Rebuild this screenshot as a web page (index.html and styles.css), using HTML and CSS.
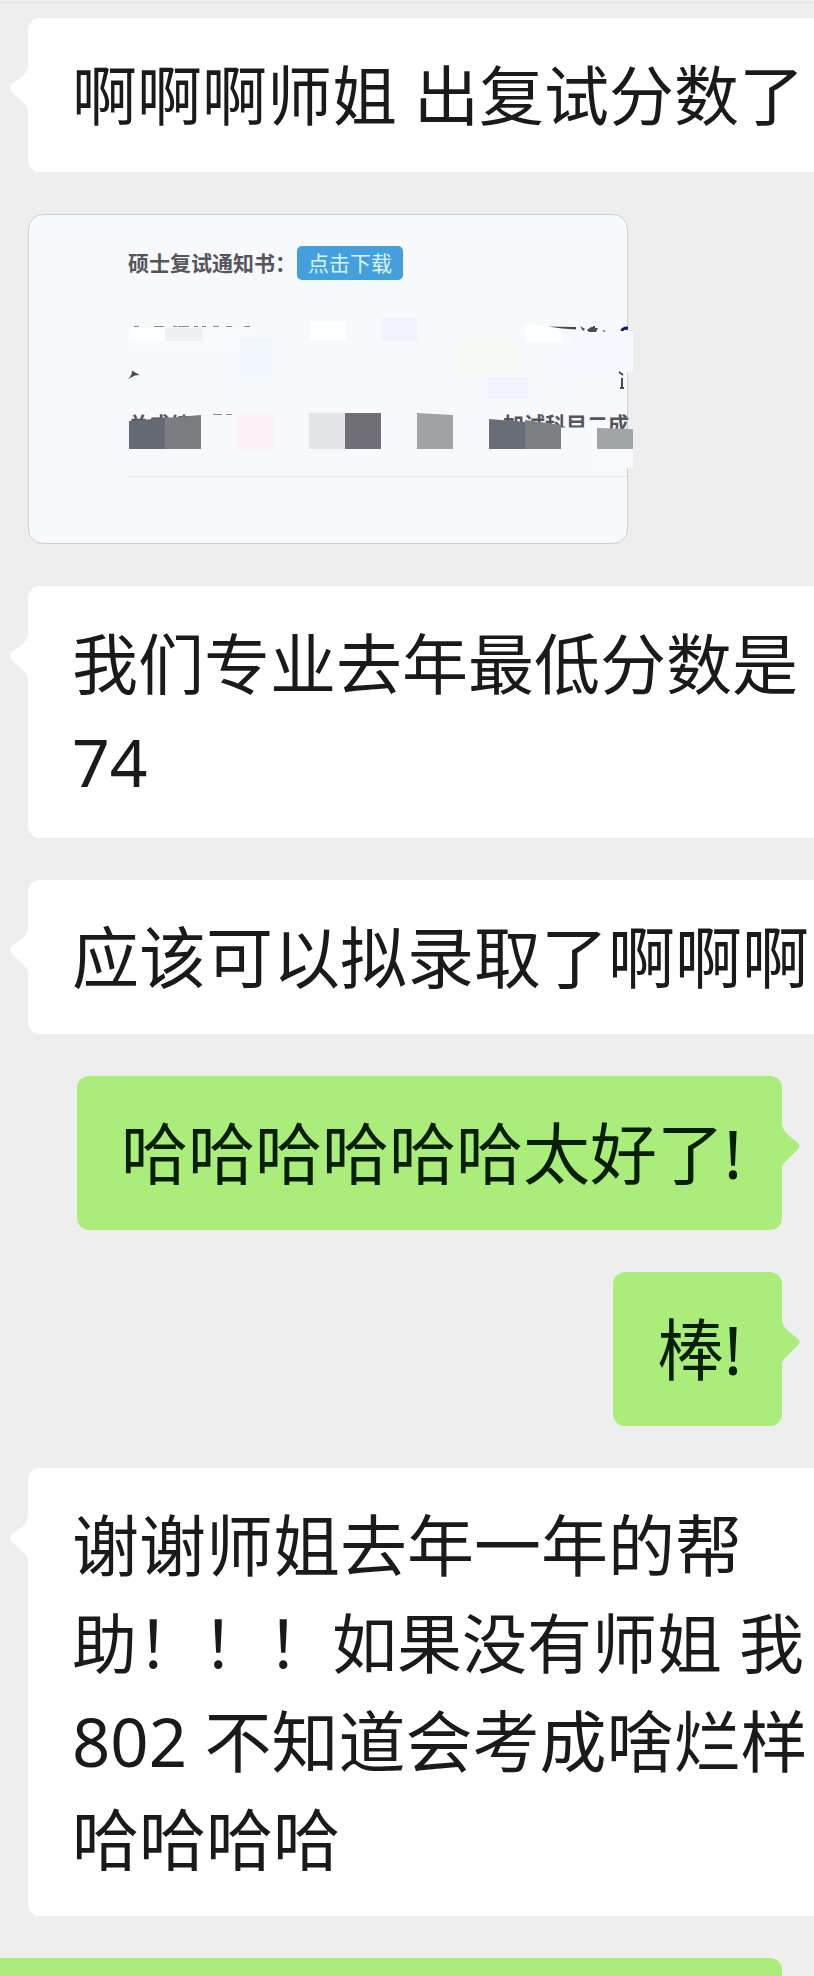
FILE: index.html
```html
<!DOCTYPE html>
<html lang="zh-CN">
<head>
<meta charset="utf-8">
<meta name="viewport" content="width=device-width, initial-scale=1">
<title>聊天记录</title>
<link rel="stylesheet" href="styles.css">
</head>
<body>
<div class="topbar"></div>
<main class="chat">
  <div class="bubble bubble--in">
    <svg class="tail" viewBox="0 0 18 42" aria-hidden="true"><path d="M18 0Q17 5 13 9L2 17Q-2 21 2 25L13 35Q17 38 18 42Z"/></svg>
    <p class="line line--tight">啊啊啊师姐 出复试分数了</p>
  </div>

  <section class="card">
    <div class="notice">
      <span class="notice__label">硕士复试通知书：</span>
      <button class="notice__button" type="button">点击下载</button>
    </div>
    <svg class="mosaic" viewBox="0 0 598 328" aria-hidden="true">
      <g transform="translate(-29 -215)">
        <path class="rule" d="M128 476.500H627"/>
        <path fill="#f8fafe" d="M568 331H633V372H568zM598 428H633V468H598zM128 330H250V346H128z"/>
        <path fill="#fdfeff" d="M129 328H165V341H129zM310 321H346V340H310zM525 324L562 327V342H525z"/>
        <path fill="#edf1f4" d="M165 328H202V341H165z"/>
        <path fill="#f0f3fe" d="M382 318H417V341H382zM488 377H528V399H488z"/>
        <path fill="#f2f7fe" d="M240 338H272V376H240z"/>
        <path fill="#f5f8fe" d="M568 333H633V372H568z"/>
        <path fill="#f5faf4" d="M454 341H522V376H454z"/>
        <path class="ink-thin" d="M134 326.500h5M154 326.500h10M173 326.500h4M178 326.500h11M194 326.500h4M202 326.500h4M213 326.500h6M226 326.500h6M244 326.500h6M213 414.500h9M226 414.500h6"/>
        <path class="ink" d="M132 370.500L139.500 375L135 375.500L128 379C131 376 132 374 132 370.500z"/>
        <path class="ink" d="M548 326.500L576 327V329.500L562 328.500zM580 326L585 329L583 331zM587 330L591 327H593V326H595V328H598L596 332H589zM602 331L604 330L606 332z"/>
        <path fill="none" stroke="#171477" stroke-width="3" d="M622 331Q622 328 628 328"/>
        <path fill="none" stroke="#4b4b50" stroke-width="2" d="M619 372L623 375M622 378V389M620 388H624"/>
        <text class="score" x="128" y="432">总成绩</text>
        <text class="score" x="503" y="432">加试科目二成</text>
        <path fill="#f7f9fd" d="M560 427.500H606V436H560z"/>
        <path fill="#666a73" d="M129 421L165 418V449H129z"/>
        <path fill="#7a7c80" d="M165 418L201 415V449H165z"/>
        <path fill="#fdf1f9" d="M237 415H273V449H237z"/>
        <path fill="#e3e4e8" d="M309 413H345V449H309z"/>
        <path fill="#706f75" d="M345 413H381V449H345z"/>
        <path fill="#9fa3a6" d="M417 413L453 415V449H417z"/>
        <path fill="#696d76" d="M489 419L525 422V449H489z"/>
        <path fill="#7d7e81" d="M525 420L561 425V449H525z"/>
        <path fill="#a0a5a8" d="M597 428L633 429V449H597z"/>
      </g>
    </svg>
  </section>

  <div class="bubble bubble--in">
    <svg class="tail" viewBox="0 0 18 42" aria-hidden="true"><path d="M18 0Q17 5 13 9L2 17Q-2 21 2 25L13 35Q17 38 18 42Z"/></svg>
    <p class="line line--medium">我们专业去年最低分数是</p>
    <p class="line line--medium">74</p>
  </div>

  <div class="bubble bubble--in">
    <svg class="tail" viewBox="0 0 18 42" aria-hidden="true"><path d="M18 0Q17 5 13 9L2 17Q-2 21 2 25L13 35Q17 38 18 42Z"/></svg>
    <p class="line">应该可以拟录取了啊啊啊</p>
  </div>

  <div class="bubble bubble--out">
    <svg class="tail" viewBox="0 0 18 42" aria-hidden="true"><path d="M0 0Q1 5 5 9L16 18Q19 21 16 24L5 35Q1 38 0 42Z"/></svg>
    <p class="line">哈哈哈哈哈哈太好了!</p>
  </div>

  <div class="bubble bubble--out">
    <svg class="tail" viewBox="0 0 18 42" aria-hidden="true"><path d="M0 0Q1 5 5 9L16 18Q19 21 16 24L5 35Q1 38 0 42Z"/></svg>
    <p class="line">棒!</p>
  </div>

  <div class="bubble bubble--in">
    <svg class="tail" viewBox="0 0 18 42" aria-hidden="true"><path d="M18 0Q17 5 13 9L2 17Q-2 21 2 25L13 35Q17 38 18 42Z"/></svg>
    <p class="line">谢谢师姐去年一年的帮</p>
    <p class="line line--tight">助！！！如果没有师姐 我</p>
    <p class="line">802 不知道会考成啥烂样</p>
    <p class="line">哈哈哈哈</p>
  </div>

  <div class="bubble bubble--next"></div>
</main>
</body>
</html>
```
FILE: styles.css
```css
* {
  box-sizing: border-box;
}

body {
  margin: 0;
  overflow-x: hidden;
  background: #eeeeee;
  color: #1a1a1a;
  font-family: "Noto Sans", "Noto Sans CJK SC", sans-serif;
}

.topbar {
  height: 3px;
  border-bottom: 1px solid #e2e2e2;
}

.chat {
  display: flex;
  flex-direction: column;
  gap: 42px;
  padding-top: 15px;
}

.bubble {
  position: relative;
  padding: 28px 40px 28px 44px;
}

.bubble--in {
  margin-left: 28px;
  padding-right: 0;
  border-radius: 12px 0 0 12px;
  background: #ffffff;
  fill: #ffffff;
}

.bubble--out {
  align-self: flex-end;
  margin-right: 32px;
  border-radius: 12px;
  background: #aaed7b;
  color: #071f03;
  fill: #aaed7b;
}

.bubble--next {
  min-height: 18px;
  margin-right: 32px;
  padding: 0;
  border-radius: 0 12px 0 0;
  background: #aaed7b;
}

.tail {
  position: absolute;
  top: 49px;
  width: 18px;
  height: 42px;
}

.bubble--in .tail {
  right: 100%;
}

.bubble--out .tail {
  left: 100%;
}

.line {
  margin: 0;
  font-size: 67px;
  line-height: 98px;
  white-space: nowrap;
}

.line--medium {
  font-size: 66px;
}

.line--tight {
  font-size: 65px;
}

.card {
  position: relative;
  width: 600px;
  min-height: 330px;
  margin-left: 28px;
  padding: 31px 0 0 99px;
  border: 1px solid #cfd0d3;
  border-radius: 15px;
  background: #f7f9fd;
}

.notice {
  display: flex;
  align-items: center;
}

.notice__label {
  width: 169px;
  color: #55555a;
  font-size: 21px;
  font-weight: 700;
  line-height: 34px;
  white-space: nowrap;
}

.notice__button {
  height: 34px;
  padding: 0 11px;
  border: 0;
  border-radius: 5px;
  background: #459fdd;
  color: #d5f7ff;
  font: inherit;
  font-size: 21px;
  line-height: 34px;
}

.mosaic {
  position: absolute;
  top: 0;
  left: 0;
  width: 598px;
  height: 328px;
  overflow: visible;
}

.rule {
  stroke: #e3e4e8;
}

.ink {
  fill: #4b4b50;
}

.ink-thin {
  stroke: #8b8c90;
}

.score {
  fill: #55555a;
  font-size: 21px;
  font-weight: 700;
}
```
